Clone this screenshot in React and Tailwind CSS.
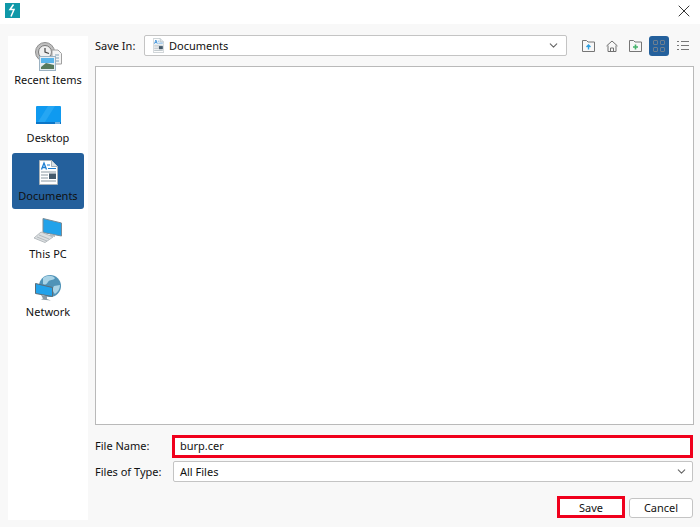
import React from 'react';
import { ChevronDown, X } from 'lucide-react';

const RecentIcon = () => (
  <svg width="27" height="29" viewBox="0 0 27 29" fill="none" className="-mb-[2px]">
    <circle cx="10" cy="10" r="9.500" fill="#bfbfbf" stroke="#8d8d8d" />
    <circle cx="10" cy="10" r="6.500" fill="#efefef" stroke="#777" />
    <path d="M10 6v4l4 1.500" stroke="#444" strokeWidth="1.200" />
    <path d="M17 8h6l3.500 3.500V22H17z" fill="#f4f4f4" stroke="#a0a0a0" />
    <path d="M20 13h4M20 16h4M20 19h4" stroke="#7f9fb5" />
    <rect x="4.500" y="14.500" width="16" height="14" fill="#e6edf2" stroke="#9cb2c2" />
    <rect x="6" y="16" width="13" height="5" fill="#59b4ea" />
    <path d="M6 25l5-4 8 2v4H6z" fill="#56795c" />
  </svg>
);

const DesktopIcon = () => (
  <svg width="25" height="18" viewBox="0 0 25 18" className="mb-[3px]">
    <rect width="25" height="18" rx="1" fill="#0f9af0" />
    <path d="M12 0h7L9 16H2z" fill="#3cb1f6" opacity="0.5" />
    <rect y="16" width="25" height="2" fill="#0b76c8" />
    <path d="M19 17h5" stroke="#d5ecfb" />
  </svg>
);

const DocumentIcon = ({ small }) => (
  <svg width={small ? 11 : 19} height={small ? 15 : 25} viewBox="0 0 19 25">
    <path d="M.5.500h12l6 6v18H.5z" fill="#fff" stroke="#a9b2b8" />
    <path d="M12.500.500v6h6" fill="#dbe3e8" stroke="#a9b2b8" />
    <path d="M2.500 9.500L5 3l2.500 6.500M3.500 7.500h3" stroke="#1f7fd1" strokeWidth="1.300" fill="none" />
    <path d="M8 5h3M9 8.500h8" stroke="#1f7fd1" />
    <path d="M2 12h15M2 15h7M2 18h7M2 21h15" stroke="#8b98a1" />
    <rect x="10" y="13.500" width="7" height="5.500" fill="#44596a" />
  </svg>
);

const PcIcon = () => (
  <svg width="28" height="25" viewBox="0 0 28 25">
    <path d="M9 .5l18.500 4.500v13L9 14.500z" fill="#22a2ea" stroke="#7b8a94" />
    <path d="M16 16l5 1v2l-5-1z" fill="#b5bbbf" />
    <path d="M7 14l12 5-8 5.500L0 20z" fill="#dcdfe1" stroke="#b5bbbf" />
    <path d="M5 17l10 4M3 19l10 4" stroke="#b5bbbf" />
  </svg>
);

const NetworkIcon = () => (
  <svg width="26" height="26" viewBox="0 0 26 26">
    <circle cx="15" cy="11" r="11" fill="#4f93b8" />
    <path d="M8 3c4-3 9-3 12 0-2 3-5 1-7 4s-3 3-5 2zM19 11l6-1c0 4-2 7-5 9-2-2-3-5-1-8z" fill="#a9d3e6" />
    <path d="M.5 8.500l17 4v9l-17-3z" fill="#22a2ea" stroke="#5b6c77" />
    <path d="M6 20l6 1v3l4 1.500-10-1 2-1z" fill="#8a9aa4" />
  </svg>
);

const places = [
  { label: 'Recent Items', icon: <RecentIcon /> },
  { label: 'Desktop', icon: <DesktopIcon /> },
  { label: 'Documents', icon: <DocumentIcon />, active: true },
  { label: 'This PC', icon: <PcIcon /> },
  { label: 'Network', icon: <NetworkIcon /> },
];

const FolderIcon = ({ children }) => (
  <svg width="13" height="12" viewBox="0 0 13 12" fill="none">
    <path d="M.5 11.500v-11h4l1.500 1.500h6.500v9.500z" fill="#f7f7f7" stroke="#767676" />
    {children}
  </svg>
);

const App = () => {
  return (
    <div className="w-[700px] h-[527px] flex flex-col bg-white text-[#111] text-[11px] overflow-hidden" style={{ fontFamily: '"Noto Sans", sans-serif' }}>
      <div className="h-6 shrink-0 flex items-center justify-between pl-[5px] pr-[6px] pb-[3px]">
        <div className="w-[15px] h-[15px] bg-[#0f98a8] flex items-center justify-center">
          <svg width="9" height="13" viewBox="0 0 9 13" fill="none">
            <path d="M5.500.5L2 5.500h4L3 12.500" stroke="#fff" strokeWidth="1.500" />
          </svg>
        </div>
        <X size={20} strokeWidth={1.100} className="text-[#222]" />
      </div>

      <div className="flex-1 bg-[#f8f8f8] flex pl-2 pr-[6px] pb-[7px]">
        <div className="w-20 mt-3 bg-white flex flex-col items-center gap-[2px] pt-px">
          {places.map((p) => (
            <div
              key={p.label}
              className={`w-[72px] h-14 flex flex-col items-center justify-end rounded-[3px] pb-[3px] ${p.active ? 'bg-[#24609c]' : ''}`}
            >
              <div className="flex-1 flex items-end">{p.icon}</div>
              <div className="h-[21px] leading-[21px] whitespace-nowrap">{p.label}</div>
            </div>
          ))}
        </div>

        <div className="flex-1 ml-[7px] flex flex-col min-w-0">
          <div className="flex items-center h-[21px] mt-[11px]">
            <div className="w-[49px] pt-px">Save In:</div>
            <div className="w-[423px] h-[21px] bg-white border border-[#c4c4c4] rounded-[2px] flex items-center pl-2 pr-[6px] gap-[5px]">
              <DocumentIcon small />
              <span className="flex-1 pt-px">Documents</span>
              <ChevronDown size={13} className="text-[#666]" />
            </div>
            <div className="flex items-center ml-[15px] gap-[11px]">
              <FolderIcon>
                <path d="M6.500 9.500V5.500M4.500 7l2-2 2 2" stroke="#2e9fe0" strokeWidth="1.400" />
              </FolderIcon>
              <svg width="12" height="12" viewBox="0 0 12 12" fill="none" stroke="#707070">
                <path d="M.5 6L6 1l5.500 5M2 5.500v6h8v-6M4.500 11.500V8h3v3.500" />
              </svg>
              <FolderIcon>
                <path d="M6.500 4.500v5M4 7h5" stroke="#45b36b" strokeWidth="1.600" />
              </FolderIcon>
              <div className="w-5 h-5 -ml-1 rounded-[3px] bg-[#24609c] grid grid-cols-2 gap-[2px] p-1">
                <span className="border border-[#6d7f90] rounded-[1px]" />
                <span className="border border-[#6d7f90] rounded-[1px]" />
                <span className="border border-[#6d7f90] rounded-[1px]" />
                <span className="border border-[#6d7f90] rounded-[1px]" />
              </div>
              <svg width="12" height="11" viewBox="0 0 12 11" stroke="#777" className="-ml-[3px]">
                <path d="M0 1.500h2M4 1.500h8M0 5.500h2M4 5.500h8M0 9.500h2M4 9.500h8" />
              </svg>
            </div>
          </div>

          <div className="h-[359px] mt-[10px] bg-white border border-[#b9b9b9]" />

          <div className="flex items-center h-[23px] mt-[10px]">
            <div className="w-[77px]">File Name:</div>
            <div className="w-[521px] h-[23px] bg-white border-[3px] border-[#f0001c] flex items-center pl-[5px]">burp.cer</div>
          </div>
          <div className="flex items-center h-[21px] mt-[3px]">
            <div className="w-[78px] pt-px">Files of Type:</div>
            <div className="w-[520px] h-[21px] bg-white border border-[#c4c4c4] rounded-[2px] flex items-center justify-between pl-[6px] pr-1">
              <span className="pt-px">All Files</span>
              <ChevronDown size={13} className="text-[#666]" />
            </div>
          </div>

          <div className="flex justify-end items-end mt-[14px] pr-px gap-1">
            <div className="w-[68px] h-[22px] bg-white border-[3px] border-[#f0001c] flex items-center justify-center pt-[3px]">Save</div>
            <div className="w-16 h-5 bg-white border border-[#c4c4c4] rounded-[3px] flex items-center justify-center pt-px">Cancel</div>
          </div>
        </div>
      </div>
    </div>
  );
};

export default App;
